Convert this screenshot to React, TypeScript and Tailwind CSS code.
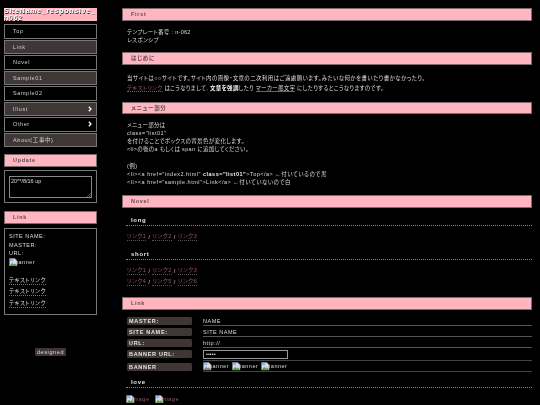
const jp = "font-['Liberation_Sans','Noto_Sans_CJK_JP',sans-serif] [font-feature-settings:'palt']";

function Broken({ alt }: { alt: string }) {
  return (
    <span className="inline-flex items-center">
      <svg width="8.5" height="8.5" viewBox="0 0 16 16" className="shrink-0">
        <path d="M1 1h10l4 4v10H1z" fill="#d5dde8" stroke="#8f8f8f" strokeWidth="1" />
        <path d="M1 15l5-6 3 3 2-2 4 5z" fill="#5f9a4a" />
        <path d="M2 2h6v4H2z" fill="#8fb2e8" />
      </svg>
      <span className="-ml-[2.5px]">{alt}</span>
    </span>
  );
}

function Heading({ children, className = "" }: { children: React.ReactNode; className?: string }) {
  return (
    <div className={`h-[12.5px] bg-[#ffb6c1] border border-[#7d6a6d] flex items-center pl-[8px] text-[5.5px] font-bold tracking-[0.7px] text-[#5a4c4f] ${className}`}>
      {children}
    </div>
  );
}

function Sub({ children, className = "" }: { children: React.ReactNode; className?: string }) {
  return (
    <div className={`h-[11px] border-b border-dotted border-[#888] ml-[4px] pl-[5px] text-[6px] font-bold tracking-[0.7px] text-[#e8e8e8] leading-[10px] ${className}`}>
      {children}
    </div>
  );
}

function NavItem({ label, dark, arrow }: { label: string; dark?: boolean; arrow?: boolean }) {
  return (
    <div className={`h-[14.5px] mb-[1px] border border-[#777] flex items-center justify-between pl-[8px] pr-[4px] text-[5.5px] tracking-[0.6px] text-[#d0d0d0] ${dark ? "bg-[#3f3735]" : "bg-black"}`}>
      <span>{label}</span>
      {arrow && (
        <svg width="4" height="6" viewBox="0 0 4 6" fill="none" stroke="#fff" strokeWidth="1.3">
          <path d="M0.8 0.7L3 3L0.8 5.3" />
        </svg>
      )}
    </div>
  );
}

function LinkRow({ items }: { items: string[] }) {
  return (
    <div className="flex items-center h-[11px] text-[5.5px] tracking-[0.5px] text-[#945a66]">
      {items.map((t, i) => (
        <span key={t} className="flex">
          {i > 0 && <span className="text-[#ccc] mx-[2px]">/</span>}
          <span className="border-b border-dotted border-[#555] leading-[7px]">{t}</span>
        </span>
      ))}
    </div>
  );
}

function Label({ children }: { children: React.ReactNode }) {
  return (
    <div className="w-[65px] h-[8px] rounded-[1.5px] bg-[#3f3735] pl-[2px] text-[5.5px] font-bold tracking-[0.7px] text-[#e4e4e4] leading-[8px] shrink-0">
      {children}
    </div>
  );
}

function DataRow({ label, children, className = "" }: { label: string; children: React.ReactNode; className?: string }) {
  return (
    <div className={`flex mb-[2px] ${className}`}>
      <Label>{label}</Label>
      <div className="flex-1 ml-[11px] border-b border-[#555] text-[5.5px] tracking-[0.5px] text-[#dcdcdc] leading-[8px] h-[9px]">
        {children}
      </div>
    </div>
  );
}

export default function App() {
  return (
    <div className={`h-[405px] w-[540px] overflow-hidden bg-black flex ${jp}`}>
      <aside className="w-[97px] ml-[4px] shrink-0 flex flex-col blur-[0.25px]">
        <div className="mt-[8px] w-[93px] h-[13px] bg-[#ffb6c1] text-[7px] leading-[6.5px] font-bold tracking-[0.75px] text-white [text-shadow:0.5px_0.5px_0_#222] mb-[3px] whitespace-nowrap">
          SiteName_responsive_<br />n062
        </div>
        <div className="w-[93px]">
          <NavItem label="Top" />
          <NavItem label="Link" dark />
          <NavItem label="Novel" />
          <NavItem label="Sample01" dark />
          <NavItem label="Sample02" />
          <NavItem label="Illust" dark arrow />
          <NavItem label="Other" arrow />
          <NavItem label="About(工事中)" dark />
          <Heading className="mt-[7px]">Update</Heading>
          <div className="mt-[3px] h-[33.5px] border border-[#777] px-[4px] pt-[5px]">
            <div className="relative h-[22px] border border-[#888] text-[5.5px] text-[#ddd] pl-[1px] pt-[1px] leading-[7px]">
              20**/8/16 up
              <svg width="4" height="4" viewBox="0 0 4 4" className="absolute right-0 bottom-0" stroke="#888" strokeWidth="0.6">
                <path d="M0 4L4 0M2 4L4 2" />
              </svg>
            </div>
          </div>
          <Heading className="mt-[8px]">Link</Heading>
          <div className="mt-[4px] h-[87px] border border-[#777] px-[4px] pt-[3.5px] text-[5.5px] tracking-[0.5px] text-[#dcdcdc]">
            <div className="h-[8.5px] leading-[8.5px]">SITE NAME:</div>
            <div className="h-[8.5px] leading-[8.5px]">MASTER:</div>
            <div className="h-[8.5px] leading-[8.5px]">URL:</div>
            <div className="h-[9px] leading-[8px]"><Broken alt="banner" /></div>
            <div className="mt-[9px] flex flex-col items-start gap-[2.5px]">
              {["テキストリンク", "テキストリンク", "テキストリンク"].map((t, i) => (
                <span key={i} className="border-b border-dotted border-[#777] leading-[8px] h-[9px]">{t}</span>
              ))}
            </div>
          </div>
          <div className="mt-[33px] flex justify-center">
            <span className="px-[2px] rounded-[1px] bg-[#3f3735] text-[5.5px] tracking-[0.6px] text-[#ddd] leading-[8px]">designed</span>
          </div>
        </div>
      </aside>

      <main className="ml-[21px] w-[410px] pt-[8px] blur-[0.25px]">
        <Heading>First</Heading>
        <div className="mt-[7px] pl-[5px] text-[5.5px] tracking-[0.3px] text-[#dcdcdc] leading-[8.3px]">
          <p>テンプレート番号 : n-062</p>
          <p>レスポンシブ</p>
        </div>
        <Heading className="mt-[8px]">はじめに</Heading>
        <div className="mt-[8px] pl-[5px] text-[5.5px] text-[#dcdcdc] leading-[10px]">
          <p className="tracking-[0.4px]">当サイトは○○サイトです。サイト内の画像・文章の二次利用はご遠慮願います。みたいな何かを書いたり書かなかったり。</p>
          <p className="tracking-[0.3px]">
            <span className="text-[#945a66] border-b border-dotted border-[#666]">テキストリンク</span> はこうなりまして, <b className="text-[#f2f2f2]">文章を強調</b>したり <span className="border-b border-[#8a5460]">マーカー風文字</span> にしたりするとこうなりますのです。
          </p>
        </div>
        <Heading className="mt-[9px]">メニュー部分</Heading>
        <div className="mt-[6.5px] pl-[5px] text-[5.5px] tracking-[0.5px] text-[#dcdcdc] leading-[8.25px]">
          <p className="tracking-[0.3px]">メニュー部分は</p>
          <p>class="list01"</p>
          <p className="tracking-[0.35px]">を付けることでボックスの背景色が変化します。</p>
          <p className="tracking-[0.35px]">&lt;li&gt;の後のa もしくは span に追加してください。</p>
          <p className="h-[8.25px]"></p>
          <p>(例)</p>
          <p>&lt;li&gt;&lt;a href="index2.html" <b className="text-[#f2f2f2]">class="list01"</b>&gt;Top&lt;/a&gt; ←付いているので黒</p>
          <p>&lt;li&gt;&lt;a href="sample.html"&gt;Link&lt;/a&gt; ←付いていないので白</p>
        </div>
        <Heading className="mt-[8.5px]">Novel</Heading>
        <Sub className="mt-[7.5px]">long</Sub>
        <div className="mt-[5.5px] pl-[5px]"><LinkRow items={["リンク1", "リンク2", "リンク3"]} /></div>
        <Sub className="mt-[6.5px]">short</Sub>
        <div className="mt-[5.5px] pl-[5px]">
          <LinkRow items={["リンク1", "リンク2", "リンク3"]} />
          <LinkRow items={["リンク4", "リンク5", "リンク6"]} />
        </div>
        <Heading className="mt-[9.5px]">Link</Heading>
        <div className="mt-[7.5px] pl-[5px] flex flex-col">
          <DataRow label="MASTER:">NAME</DataRow>
          <DataRow label="SITE NAME:">SITE NAME</DataRow>
          <DataRow label="URL:" className="!mb-[1.5px]">http://</DataRow>
          <div className="flex mb-[2px]">
            <Label>BANNER URL:</Label>
            <div className="flex-1 ml-[11px] border-b border-[#444] h-[11px]">
              <div className="w-[85px] h-[9px] border border-[#999] bg-black text-[5.5px] text-[#ddd] pl-[2px] leading-[6px]">•••••</div>
            </div>
          </div>
          <div className="flex">
            <Label>BANNER</Label>
            <div className="flex-1 ml-[11px] border-b border-[#444] text-[5.5px] tracking-[0.5px] text-[#dcdcdc] h-[9px] flex items-center gap-[3px]">
              <Broken alt="banner" /><Broken alt="banner" /><Broken alt="banner" />
            </div>
          </div>
        </div>
        <Sub className="mt-[5px]">love</Sub>
        <div className="mt-[7px] pl-[4px] h-[9px] flex items-center gap-[6px] text-[5.5px] tracking-[0.5px] text-[#945a66]">
          <Broken alt="image" />
          <Broken alt="image" />
        </div>
      </main>
    </div>
  );
}
